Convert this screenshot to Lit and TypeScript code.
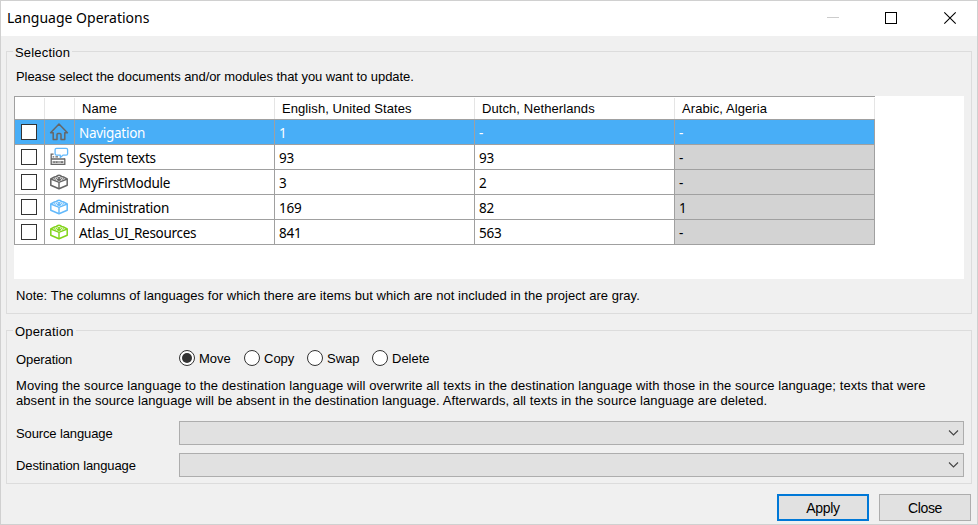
import { LitElement, html, css, svg } from "lit";
import { customElement, property, state } from "lit/decorators.js";
import { classMap } from "lit/directives/class-map.js";

interface Row {
  icon: string;
  name: string;
  tone: string;
  counts: string[];
}

const ROWS: Row[] = [
  { icon: "home", name: "Navigation", tone: "dark", counts: ["1", "-", "-"] },
  { icon: "system", name: "System texts", tone: "dark", counts: ["93", "93", "-"] },
  { icon: "module", name: "MyFirstModule", tone: "dark", counts: ["3", "2", "-"] },
  { icon: "module", name: "Administration", tone: "blue", counts: ["169", "82", "1"] },
  { icon: "module", name: "Atlas_UI_Resources", tone: "green", counts: ["841", "563", "-"] },
];

@customElement("row-icon")
class RowIcon extends LitElement {
  static styles = css`
    :host { display: block; width: 20px; height: 20px; }
    svg { display: block; }
    .dark { color: #666; }
    .blue { color: #63b9fb; }
    .green { color: #82d41a; }
  `;
  @property() kind = "module";
  @property() tone = "dark";

  private shape() {
    if (this.kind === "home") {
      return svg`<path d="M1.6 10.8 L10 2 L18.4 10.8 H15.8 V17.4 H12 V12.4 Q12 11.4 11 11.4 H9 Q8 11.4 8 12.4 V17.4 H4.2 V10.8 Z"
        fill="none" stroke="currentColor" stroke-width="1.5" stroke-linejoin="round"/>`;
    }
    if (this.kind === "system") {
      return svg`
        <path d="M4.6 7.2 H2.2 V17.4 H15.8 V11.4" fill="none" stroke="currentColor" stroke-width="1.3"/>
        <path d="M2 12 H16" stroke="currentColor" stroke-width="1.5"/>
        <rect x="3.4" y="14" width="11.2" height="2.2" fill="#aaa"/>
        <path d="M4.4 15.1 H5.8 M7 15.1 H8.4 M12 15.1 H14" stroke="currentColor" stroke-width="1.2"/>
        <path d="M3.6 9.8 H5.2 M6.4 9.8 H9" stroke="currentColor" stroke-width="1.2"/>
        <path d="M7.5 1.4 H17.2 Q18.6 1.4 18.6 2.8 V6.7 Q18.6 8.1 17.2 8.1 H14.2 L11.3 10.4 V8.1 H7.5 Q6.1 8.1 6.1 6.7 V2.8 Q6.1 1.4 7.5 1.4 Z"
          fill="#fff" stroke="#63b9fb" stroke-width="1.3" stroke-linejoin="round"/>`;
    }
    return svg`
      <path d="M1.8 7 L4.6 5.4 Q5.8 4.3 7.2 4.8 Q8 3.2 10 3.2 Q12 3.2 12.8 4.8 Q14.2 4.3 15.4 5.4 L18.2 7 V13.2 L10 16.7 L1.8 13.2 Z"
        fill="none" stroke="currentColor" stroke-width="1.5" stroke-linejoin="round"/>
      <path d="M1.8 7 L10 10.3 L18.2 7 M10 10.3 V16.7" fill="none" stroke="currentColor" stroke-width="1.4"/>
      <path d="M4.6 6.2 Q6.2 8.2 8 6.4 M12 6.4 Q13.8 8.2 15.4 6.2 M8 4.8 Q10 6.4 12 4.8"
        fill="none" stroke="currentColor" stroke-width="1"/>
      <ellipse cx="10" cy="7.6" rx="2.1" ry="1.5" fill="currentColor"/>`;
  }

  render() {
    return html`<svg class=${this.tone} width="20" height="20" viewBox="0 0 20 20">${this.shape()}</svg>`;
  }
}

@customElement("group-box")
class GroupBox extends LitElement {
  static styles = css`
    :host { display: block; }
    fieldset {
      box-sizing: border-box; height: 100%; min-width: 0; margin: 0; padding: 0 7px;
      border: 1px solid #dcdcdc;
    }
    legend { box-sizing: border-box; height: 17px; margin: 0 0 0 -1px; padding: 1px 2px 0; line-height: 17px; letter-spacing: 0.18px; }
  `;
  @property() label = "";
  render() {
    return html`<fieldset><legend>${this.label}</legend><slot></slot></fieldset>`;
  }
}

@customElement("app-root")
class AppRoot extends LitElement {
  static styles = css`
    :host {
      display: flex; flex-direction: column; box-sizing: border-box; width: 978px; height: 525px;
      border: 1px solid #d0d0d0; background: #f0f0f0; color: #000; overflow: hidden;
      font: 13px "Liberation Sans", Arial, sans-serif;
    }
    .titlebar {
      display: flex; align-items: center; height: 35px; flex: none; padding-left: 6px; background: #fff;
      font: 14px "Noto Sans", sans-serif;
    }
    .title { flex: 1; padding-bottom: 2px; white-space: nowrap; }
    .caption svg { display: block; }
    .body { display: flex; flex-direction: column; padding: 7px 6px 0 5px; }
    .selection { height: 271px; margin-right: -1px; }
    .operation { height: 162px; margin: 8px -1px 0 0; }
    .text { white-space: nowrap; line-height: 15px; padding-left: 2px; }
    .intro { margin-top: 9px; letter-spacing: -0.06px; }
    .grid-area { height: 183px; margin-top: 12px; background: #fff; }
    .grid { width: 861px; box-sizing: border-box; border-left: 1px solid #a0a0a0; border-top: 1px solid #a0a0a0; }
    .row { display: grid; grid-template-columns: 30px 30px 200px 200px 200px 200px; height: 25px; }
    .cell {
      display: flex; align-items: center; box-sizing: border-box; min-width: 0; padding: 2px 0 0 4px;
      border-right: 1px solid #a0a0a0; border-bottom: 1px solid #a0a0a0;
      font: 13.5px "Noto Sans", sans-serif; letter-spacing: -0.28px; white-space: nowrap;
    }
    .row.head { height: 23px; border-bottom: 1px solid #a0a0a0; box-sizing: border-box; padding-top: 1px; }
    .head .cell {
      padding: 0 0 0 7px; border-bottom: 0; border-right-color: #e5e5e5;
      font: 13px "Liberation Sans", Arial, sans-serif; letter-spacing: 0.08px;
    }
    .cell.mark { padding: 0 0 0 6px; }
    .cell.pic { padding: 0 0 0 4px; }
    .cell.gray { background: #d3d3d3; }
    .selected .cell, .selected .cell.gray { background: #48aef7; color: #fff; }
    .check { width: 16px; height: 16px; box-sizing: border-box; border: 1px solid #333; background: #fff; }
    .note { margin-top: 9px; letter-spacing: 0.04px; }
    .options { display: flex; align-items: center; height: 16px; margin-top: 11px; }
    .options .text { width: 165px; padding-top: 2px; box-sizing: border-box; letter-spacing: -0.1px; }
    .option { display: flex; align-items: center; gap: 4px; box-sizing: border-box; white-space: nowrap; }
    .move { width: 65px; }
    .copy { width: 63px; }
    .swap { width: 65px; }
    .radio {
      display: grid; place-items: center; flex: none; width: 16px; height: 16px; box-sizing: border-box;
      border: 1px solid #333; border-radius: 50%; background: #fff;
    }
    .dot { width: 10px; height: 10px; border-radius: 50%; background: #333; }
    .explain { margin-top: 12px; }
    .first-line { letter-spacing: 0.08px; }
    .second-line { letter-spacing: 0.063px; }
    .field { display: flex; align-items: center; height: 24px; margin-top: 8px; }
    .field.first { margin-top: 13px; }
    .field .text { width: 165px; padding-top: 1px; box-sizing: border-box; letter-spacing: -0.12px; }
    .select {
      display: flex; align-items: center; justify-content: flex-end; box-sizing: border-box; width: 785px; height: 24px;
      padding-right: 4px; border: 1px solid #adadad; background: #e1e1e1;
    }
    .actions { display: flex; justify-content: flex-end; gap: 10px; margin-top: 10px; }
    .button {
      box-sizing: border-box; width: 92px; height: 27px; padding: 0; border: 1px solid #adadad; border-radius: 0;
      background: #e1e1e1; color: #000; font: 14px "Liberation Sans", Arial, sans-serif; letter-spacing: -0.35px;
    }
    .button.primary { border: 2px solid #0078d7; }
  `;

  @state() private operation = "Move";

  private renderRow(row: Row, index: number) {
    return html`<div class=${classMap({ row: true, selected: index === 0 })}>
      <div class="cell mark"><span class="check"></span></div>
      <div class="cell pic"><row-icon kind=${row.icon} tone=${row.tone}></row-icon></div>
      <div class="cell">${row.name}</div>
      ${row.counts.map((c, i) => html`<div class=${classMap({ cell: true, gray: i === 2 })}>${c}</div>`)}
    </div>`;
  }

  private renderSelect() {
    return html`<div class="select"><svg width="11" height="6" viewBox="0 0 11 6">
      <path d="M1 0.5 L5.5 5 L10 0.5" fill="none" stroke="#444" stroke-width="1.1"/></svg></div>`;
  }

  render() {
    return html`
      <div class="titlebar">
        <span class="title">Language Operations</span>
        <div class="caption">
          <svg width="151" height="34" viewBox="826 1 151 34">
            <path d="M827 16.5 H839" stroke="#ccc"/>
            <rect x="885.5" y="11.5" width="11" height="11" fill="none" stroke="#000"/>
            <path d="M944.3 11.3 L955.7 22.7 M955.7 11.3 L944.3 22.7" stroke="#000" stroke-width="1.1"/>
          </svg>
        </div>
      </div>
      <div class="body">
        <group-box class="selection" label="Selection">
          <div class="text intro">Please select the documents and/or modules that you want to update.</div>
          <div class="grid-area">
            <div class="grid">
              <div class="row head">
                <div class="cell"></div><div class="cell"></div>
                ${["Name", "English, United States", "Dutch, Netherlands", "Arabic, Algeria"].map((h) => html`<div class="cell">${h}</div>`)}
              </div>
              ${ROWS.map((r, i) => this.renderRow(r, i))}
            </div>
          </div>
          <div class="text note">Note: The columns of languages for which there are items but which are not included in the project are gray.</div>
        </group-box>
        <group-box class="operation" label="Operation">
          <div class="options">
            <span class="text">Operation</span>
            ${["Move", "Copy", "Swap", "Delete"].map((o) => html`
              <label class="option ${o.toLowerCase()}" @click=${() => (this.operation = o)}>
                <span class="radio">${o === this.operation ? html`<span class="dot"></span>` : ""}</span><span>${o}</span>
              </label>`)}
          </div>
          <div class="text explain">
            <span class="first-line">Moving the source language to the destination language will overwrite all texts in the destination language with those in the source language; texts that were</span><br>
            <span class="second-line">absent in the source language will be absent in the destination language. Afterwards, all texts in the source language are deleted.</span>
          </div>
          <div class="field first"><span class="text">Source language</span>${this.renderSelect()}</div>
          <div class="field"><span class="text">Destination language</span>${this.renderSelect()}</div>
        </group-box>
        <div class="actions">
          <button class="button primary">Apply</button>
          <button class="button">Close</button>
        </div>
      </div>`;
  }
}
